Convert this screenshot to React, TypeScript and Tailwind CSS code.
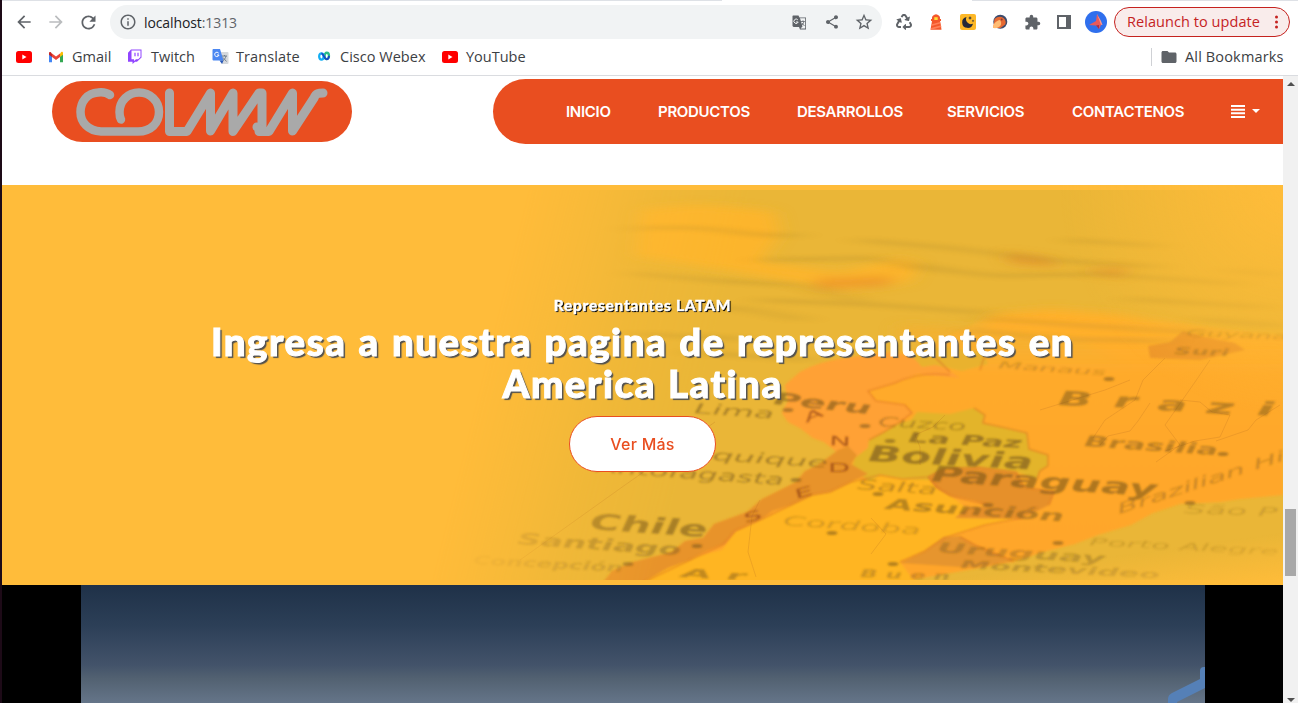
import React from "react";
import { FaRecycle } from "react-icons/fa";
import { MdArrowBack, MdArrowForward, MdExtension, MdRefresh, MdInfoOutline, MdShare, MdStarOutline, MdFolder } from "react-icons/md";

function GmailIcon() {
  return (
    <svg width="16" height="16" viewBox="0 0 16 16">
      <path d="M1 4v9.2h3V7z" fill="#4285f4" />
      <path d="M15 4v9.2h-3V7z" fill="#34a853" />
      <path d="M12 4.5 13.3 3c1-.6 1.7.1 1.7 1.2v1.5L12 8z" fill="#fbbc04" />
      <path d="M4 4.5 8 7.6l4-3.1V8l-4 3-4-3z" fill="#ea4335" />
      <path d="M1 5.7V4.2C1 3 2 2.5 2.8 3.2L4 4.5V8z" fill="#c5221f" />
    </svg>
  );
}

function TwitchIcon() {
  return (
    <svg width="16" height="16" viewBox="0 0 16 16">
      <path d="M4 .5h10.5v8L10 12.800H8L5.500 15v-2.200H1v-9z" fill="#9146ff" />
      <path d="M4.500 1.500h9v6.500l-2.300 2.200H9L7 12v-1.800H4.500z" fill="#fff" />
      <path d="M8 3.700v3.500M11 3.700v3.500" stroke="#9146ff" strokeWidth="1.200" />
    </svg>
  );
}

function TranslateIcon() {
  return (
    <svg width="17" height="17" viewBox="0 0 17 17">
      <path d="M6 4h9.500a1 1 0 0 1 1 1v10a1 1 0 0 1-1 1H10z" fill="#d5d8dc" />
      <path d="M1.200 1H8l3.500 11.500H1.500a1 1 0 0 1-1-1V1.700z" fill="#4b87f2" />
      <path d="m7.500 12.500 2.500 3.500 1.500-3.500z" fill="#2858b8" />
      <path d="M6.700 5.200A2.200 2.200 0 1 0 7 7H5" stroke="#fff" fill="none" />
      <path d="M10 8h5M12.500 7v1m1.500 0c-.5 2-1.500 3.500-3 4.500m0-3 3.500 4" stroke="#687684" fill="none" strokeWidth=".9" />
    </svg>
  );
}

function WebexIcon() {
  return (
    <svg width="14" height="11" viewBox="0 0 16 12" fill="none" strokeWidth="2.600">
      <ellipse cx="11.200" cy="5.300" rx="2.500" ry="3.600" stroke="#28bd88" />
      <ellipse cx="5" cy="6" rx="2.500" ry="3.600" stroke="#12aef3" />
      <path d="M5 2.500c3 0 3 6.800 6 6.800 1.500 0 2.500-2 2.700-4" stroke="#1649c7" strokeWidth="2.200" />
    </svg>
  );
}

function YoutubeIcon() {
  return (
    <svg width="16" height="12" viewBox="0 0 16 12">
      <rect width="16" height="12" rx="2.500" fill="#f00" />
      <path d="m6.300 3.500 4.200 2.500-4.200 2.500z" fill="#fff" />
    </svg>
  );
}

function TranslatePageIcon() {
  return (
    <svg width="15" height="15" viewBox="0 0 15 15">
      <path d="M1 .5h5.500l1 2H14v12H8l-1-2.500H1.500l-1-1V1z" fill="#5f6368" />
      <path d="M8 3.300h5.200v10.300H8.500l2-2z" fill="#f1f3f4" />
      <path d="M5.800 4.800A2.200 2.200 0 1 0 6.200 7H4" stroke="#f1f3f4" fill="none" />
      <path d="M8.800 6.500h4M11 5.300v1.200m1 0c-.4 1.700-1.200 3-2.500 4m.5-2.500 2.500 3" stroke="#5f6368" fill="none" strokeWidth=".8" />
    </svg>
  );
}

function LighthouseIcon() {
  return (
    <svg width="12" height="16" viewBox="0 0 12 16">
      <path d="M2 5V3.500Q2.500 1 6 .3 9.500 1 10 3.500V5h1v2h-1l.8 3.500.7 5.200H.5L2 7H1V5z" fill="#f4572b" />
      <path d="M4.300 3.200h3.400V6H4.300z" fill="#ffdf35" />
      <path d="m2 10.200 7.900-2.200.4 1.600-8.800 2.500zM1 14l10-2.700.3 1.700-9.300 2.500H.7z" fill="#ff8058" />
    </svg>
  );
}

function MoonIcon() {
  return (
    <svg width="16" height="16" viewBox="0 0 16 16">
      <rect width="16" height="16" rx="2" fill="#fdb827" />
      <path d="M6.500 3A5.500 5.500 0 1 0 13 9.700 5 5 0 0 1 6.500 3" fill="#242938" />
      <path d="m10 2 .6 1.400L12 4l-1.400.6L10 6l-.6-1.400L8 4l1.400-.6zM13 5.500l.4 1 .9.400-.9.400-.4 1-.4-1-.9-.4.900-.4z" fill="#242938" />
    </svg>
  );
}

function BirdIcon() {
  return (
    <svg width="16" height="16" viewBox="0 0 16 16">
      <circle cx="8.300" cy="7.800" r="7" fill="#3d4b6c" />
      <path d="M2.500 5Q7 1 11.500 4q3.300 3 1.700 6.500L8.500 14 1 14 2 9z" fill="#e76932" />
      <path d="M1 14c0-4 3-7.500 7-8 3 4 0 9-7 8" fill="#ffbd74" />
      <circle cx="9.700" cy="5.500" r="1" fill="#8b3b35" />
    </svg>
  );
}

function ProfileIcon() {
  return (
    <svg width="22" height="22" viewBox="0 0 22 22">
      <circle cx="11" cy="11" r="11" fill="#2f6fed" />
      <path d="m12 3 4 7 1.500 4-3.500-.5z" fill="#ff968a" />
      <path d="m12 3-1 7-7 4 7 .5 3 3.500 2-4z" fill="#e95a5b" />
      <path d="m11 14.500 3 3.500v-4z" fill="#a22f4d" />
    </svg>
  );
}

function Toolbar() {
  return (
    <div className="flex h-[44px] shrink-0 items-center pr-[8px] pl-[12px] text-[#5f6368]">
      <div className="flex w-[96px] items-center gap-[12px]">
        <MdArrowBack size={20} />
        <MdArrowForward size={20} className="text-[#babcbe]" />
        <MdRefresh size={21} />
      </div>
      <div className="flex h-[34px] w-[772px] items-center rounded-full bg-[#f1f3f4] pr-[8px] pl-[9px]">
        <MdInfoOutline size={18} />
        <span className="ml-[7px] grow font-['Open_Sans',sans-serif] text-[14px] tracking-[-0.1px] text-[#202124]">
          localhost<span className="text-[#5f6368]">:1313</span>
        </span>
        <TranslatePageIcon />
        <MdShare size={16} className="ml-[17px]" />
        <MdStarOutline size={20} className="ml-[14px]" />
      </div>
      <div className="ml-[14px] flex grow items-center">
        <FaRecycle size={16} />
        <span className="ml-[18px]"><LighthouseIcon /></span>
        <span className="ml-[18px]"><MoonIcon /></span>
        <span className="ml-[16px]"><BirdIcon /></span>
        <MdExtension size={17} className="ml-[16px]" />
        <svg className="ml-[16px]" width="14" height="14" viewBox="0 0 14 14">
          <path d="M1 1h12v12H1z" fill="none" stroke="#5f6368" strokeWidth="2" />
          <path d="M9 1h4v12H9z" fill="#5f6368" />
        </svg>
        <span className="ml-[14px]"><ProfileIcon /></span>
      </div>
      <div className="flex h-[30px] w-[176px] items-center justify-between rounded-full border border-[#c5221f] bg-[#f9eceb] pr-[11px] pl-[12px] font-['Open_Sans',sans-serif] text-[14.5px] tracking-[0.06px] text-[#c5221f]">
        <span className="whitespace-nowrap">Relaunch to update</span>
        <svg width="3" height="14" viewBox="0 0 3 14" fill="currentColor">
          <circle cx="1.500" cy="2" r="1.500" /><circle cx="1.500" cy="7" r="1.500" /><circle cx="1.500" cy="12" r="1.500" />
        </svg>
      </div>
    </div>
  );
}

function Bookmarks() {
  return (
    <div className="flex h-[32px] shrink-0 items-center border-b border-[#dadce0] pb-[6px] pl-[14px] font-['Open_Sans',sans-serif] text-[14.5px] text-[#3c4043]">
      <div className="w-[32px]"><YoutubeIcon /></div>
      <div className="flex w-[79px] items-center gap-[8px]"><GmailIcon />Gmail</div>
      <div className="flex w-[85px] items-center gap-[8px]"><TwitchIcon />Twitch</div>
      <div className="flex w-[105px] items-center gap-[7px] tracking-[0.1px]"><TranslateIcon />Translate</div>
      <div className="flex w-[125px] items-center gap-[9px] whitespace-nowrap"><WebexIcon /><span className="tracking-[0.02px]">Cisco Webex</span></div>
      <div className="flex items-center gap-[8px]"><YoutubeIcon />YouTube</div>
      <div className="ml-auto flex items-center border-l border-[#cfd1d5] pl-[8px]">
        <MdFolder size={18} className="mr-[7px] text-[#5f6368]" />
        <span className="w-[113px] whitespace-nowrap leading-[16px] tracking-[0.15px]">All Bookmarks</span>
      </div>
    </div>
  );
}

function ColmanLogo() {
  return (
    <svg width="300" height="61" viewBox="0 0 300 61" role="img" aria-label="Colman">
      <rect width="300" height="61" rx="30.500" fill="#e94e20" />
      <g fill="none" stroke="#a9a9a9" strokeWidth="8.500" strokeLinecap="round" strokeLinejoin="round">
        <path d="M58 14C54 11 50 11 46 11.500 35 12 28.500 21 28.500 31S36 50 49 50.500h37C99 50.500 107 42 107 31S98 11.500 87 11.500 67.500 20 67.500 31c0 3 0 5 1.500 7.500" />
        <path d="M117.500 12v38.500h17.500L158.500 12v38L181 12v38.500L207 12h3v38.500h-3" strokeWidth="9" />
        <path d="M205 46l6 4.500h6L240.500 12v38L262 17c2-5 5-5 9-5" strokeWidth="9" />
      </g>
    </svg>
  );
}

const links = [
  { label: "INICIO", box: "w-[92px]" },
  { label: "PRODUCTOS", box: "w-[139px]" },
  { label: "DESARROLLOS", box: "w-[150px]" },
  { label: "SERVICIOS", box: "w-[125px]" },
  { label: "CONTACTENOS", box: "w-[159px]" },
];

function Header() {
  return (
    <header className="flex h-[109px] shrink-0 items-start justify-between bg-white pt-[3px] pl-[50px]">
      <a href="#" className="mt-[2px]"><ColmanLogo /></a>
      <nav className="flex h-[65px] w-[790px] items-center rounded-l-full bg-[#e94e20] pl-[73px] font-['Inter',sans-serif] text-[15px] font-semibold tracking-[-0.3px] text-white">
        {links.map((l) => <a key={l.label} href="#" className={`shrink-0 pt-[2px] whitespace-nowrap ${l.box}`}>{l.label}</a>)}
        <svg width="30" height="13" viewBox="0 0 30 13" fill="#fff">
          <path d="M0 0h14v2H0zM0 3.700h14v2H0zM0 7.300h14v2H0zM0 11h14v2H0zM21 4h8l-4 4z" />
        </svg>
      </nav>
    </header>
  );
}

type Label = [string, number, number, number, number, number, number, boolean];

// text, x, y, width, size, angle, opacity, bold
const labels: Label[] = [
  ["Lima", 694, 413, 80, 14, 4, 0.5, false],
  ["Peru", 773, 404, 98, 17, 6, 0.55, true],
  ["Cuzco", 878, 426, 88, 13, 3, 0.42, false],
  ["La Paz", 908, 442, 114, 14, 3, 0.6, true],
  ["Bolivia", 868, 461, 165, 22, 3, 0.6, true],
  ["Paraguay", 931, 481, 226, 22, 4, 0.55, true],
  ["Iquique", 702, 459, 126, 14, 4, 0.5, false],
  ["Antofagasta", 596, 472, 188, 15, 4, 0.5, false],
  ["Salta", 857, 489, 80, 14, 4, 0.42, false],
  ["Asunción", 886, 509, 178, 15, 4, 0.48, true],
  ["Cordoba", 783, 525, 138, 13, 4, 0.28, false],
  ["Chile", 590, 529, 117, 22, 4, 0.52, true],
  ["Santiago", 517, 544, 164, 16, 4, 0.38, true],
  ["Concepción", 473, 564, 150, 12, 3, 0.25, true],
  ["B", 1058, 405, 34, 20, 3, 0.48, true],
  ["r", 1113, 407, 24, 20, 3, 0.45, true],
  ["a", 1157, 410, 30, 19, 3, 0.45, true],
  ["z", 1206, 413, 28, 20, 3, 0.45, true],
  ["i", 1256, 415, 18, 19, 3, 0.45, true],
  ["Brasilia", 1084, 446, 134, 15, 4, 0.46, true],
  ["Brazilian Hi", 1119, 514, 175, 14, -18, 0.36, false],
  ["Manaus", 998, 368, 108, 9, 4, 0.3, false],
  ["Guyana", 1186, 336, 102, 9, 2, 0.28, false],
  ["Suri", 1174, 354, 55, 10, 2, 0.38, true],
  ["Uruguay", 937, 552, 168, 14, 4, 0.33, true],
  ["Montevideo", 960, 568, 200, 11, 3, 0.33, true],
  ["Porto Alegre", 1089, 545, 190, 10, 3, 0.22, false],
  ["São P", 1184, 513, 94, 12, 2, 0.22, false],
  ["A r", 681, 577, 65, 12, 3, 0.42, true],
  ["B u e n", 860, 577, 90, 11, 2, 0.32, true],
];

const andes: [string, number, number, number][] = [
  ["A", 806, 423, -22], ["N", 829, 445, 3], ["D", 828, 472, 0], ["E", 796, 499, -15], ["S", 745, 523, -15],
];

const streaks = [
  "M628 229q60-4 100 2t70 4", "M630 273l90 8 80 4 65 18", "M665 305l80 4 60 11", "M760 260l110-2 90 14",
  "M860 240l90 8 100 12 110 7", "M900 266l100 10 100-2 140 10", "M1070 240l90 6", "M980 318l110 8 120 7",
  "M760 300l120 5 110 8", "M635 334l110 5", "M1130 299l135 8", "M1230 270l50 5", "M970 330l90 9 110 2",
  "M1200 319l82 7", "M690 352l120 8",
];

const landShape =
  "M785 385 800 372Q820 361 846 358L880 351 926 350 950 335 985 318 1035 315 1100 322 1170 322 1283 336V495L1240 499 1221 502 1180 504 1153 513 1131 525 1098 535 1075 544 1043 552 1013 562 900 582H604L612 571 633 562 672 552 685 541 703 538 714 524 747 512 762 499 796 482 805 471 818 465 837 452 824 442 813 438 800 428 788 422 782 413 788 401Z";
const argentinaShape =
  "M851 478 870 481 880 475 902 479 928 477 938 488 951 496 966 508 955 518 1021 518 985 525 944 538 925 551 900 562 915 582H640L668 568 690 558 722 550 735 532 762 519 791 505 812 495 830 492Z";
const andesShape =
  "M838 450 848 446 857 455 851 464 868 474 851 482 830 492 812 495 791 505 772 511 762 519 735 531 724 544 706 551 690 560 668 568 644 582H603L612 571 633 562 672 552 685 541 703 538 714 524 747 512 762 499 796 482 805 471 818 465Z";
const boliviaShape =
  "M911 420 917 412 950 414 974 408 985 415 983 423 1006 428 1027 433 1029 449 1048 455 1048 466 1040 471 1037 479 1016 472 977 467 961 471 950 476 928 480 902 479 880 475 870 481 851 470 855 458 868 448 869 440 884 432 897 424Z";

function SouthAmericaMap() {
  return (
    <svg width="1281" height="400" viewBox="2 185 1281 400" className="block">
      <defs>
        <linearGradient id="fade" gradientUnits="userSpaceOnUse" x1="575" x2="785" y1="0" y2="52">
          <stop offset="0" stopColor="#000" /><stop offset=".3" stopColor="#555" /><stop offset=".6" stopColor="#bbb" /><stop offset="1" stopColor="#fff" />
        </linearGradient>
        <radialGradient id="corner" gradientUnits="userSpaceOnUse" cx="1290" cy="185" r="230">
          <stop offset="0" stopColor="#ffbc3a" /><stop offset="1" stopColor="#ffbc3a" stopOpacity="0" />
        </radialGradient>
        <linearGradient id="cornerLow" x1=".5" x2="1" y1="0" y2="1">
          <stop offset=".6" stopColor="#ffbc3a" stopOpacity="0" /><stop offset="1" stopColor="#ffbc3a" />
        </linearGradient>
        <linearGradient id="land" x1="0" x2="0" y1="0" y2="1">
          <stop offset="0" stopColor="#ffb02f" stopOpacity=".25" /><stop offset=".22" stopColor="#ffaa2b" /><stop offset="1" stopColor="#ffa52b" />
        </linearGradient>
        <mask id="mapMask"><rect x="400" y="190" width="883" height="390" fill="url(#fade)" /></mask>
        <filter id="far" x="-20%" y="-40%" width="140%" height="180%"><feGaussianBlur stdDeviation="9 4.500" /></filter>
        <filter id="mist" filterUnits="userSpaceOnUse" x="400" y="185" width="883" height="400"><feGaussianBlur stdDeviation="14 2.200" /></filter>
        <filter id="near"><feGaussianBlur stdDeviation="1.200" /></filter>
        <filter id="ink"><feGaussianBlur stdDeviation="1.200 .8" /></filter>
      </defs>
      <rect x="2" y="185" width="1281" height="400" fill="#ffbc3a" />
      <g mask="url(#mapMask)">
        <rect x="400" y="185" width="883" height="400" fill="#eab637" />
        <g filter="url(#far)">
          <path d="M640 210Q700 200 775 212l5 22-20 28 80 10 60-14 20 6-10 18-65 8-120-20-90-14z" fill="#ffb52a" opacity=".85" />
          <path d="M815 279l80-3-8 10-70 3z" fill="#ee9a2a" />
          <path d="M1005 253l45 6 10 8-50-4zM1080 270l50-3-10 10z" fill="#e08c2b" opacity=".7" />
          <path d="M990 315l60-6 70 5 120 22 60 0v30l-160 5-60-30-100-8z" fill="#ffb02a" />
          <path d="M900 325l70 3 30 12-20 10-80-10z" fill="#f2b132" />
        </g>
        <g filter="url(#near)">
          <path d={landShape} fill="url(#land)" />
          <path d="M785 385 800 372Q820 361 846 358L890 353 926 357 950 371 960 378 918 374 895 383 868 391 876 401 905 405 912 413 897 424 884 432 869 440 868 448 855 458 848 464 837 452 824 442 813 438 800 428 788 422 782 413 788 401Z" fill="#ffa136" />
          <path d="M911 355 940 347 983 352 988 364 962 371 935 365 922 367Z" fill="#e9b22f" />
          <path d={argentinaShape} fill="#ffb524" />
          <path d={boliviaShape} fill="#e3b42a" />
          <path d={andesShape} fill="#e8932a" />
          <path d="M928 477 943 469 977 467 1016 472 1024 487 1054 492 1049 505 1021 519 955 518 966 509 988 506 975 501 950 496 936 488Z" fill="#e6902b" />
          <path d="M944 537 960 536 975 545 1013 561 975 568 900 563 925 551Z" fill="#e6952d" />
          <path d="M1148 346 1170 342 1183 331 1205 337 1235 343 1245 350 1200 360 1150 358Z" fill="#ee9629" />
        </g>
        <g fill="none" stroke="#d66a22" strokeWidth="1.200" opacity=".6" filter="url(#ink)">
          <path d="M950 375Q920 371 895 383L868 391 876 401 905 405 912 413 897 424 884 432 869 440" />
          <path d="M974 408 985 415 983 423 1006 428 1027 433 1029 449 1048 455 1048 466 1040 471 1037 479" />
          <path d="M851 482 880 475 902 479 928 477 943 469 977 467 1016 472 1024 487 1054 492 1049 505" />
          <path d="M928 477 938 488 951 496 988 505M1021 518 985 525 944 538 925 551 900 562M950 372l-15-15M980 370l5-15M960 537l15 8 38 16" />
          <path d="M851 482 830 492 812 495 791 505 762 519 735 531 724 544 690 560 644 582" />
        </g>
        <g fill="none" stroke="#b76b21" strokeWidth=".8" opacity=".3">
          <path d="M1165 358l-22 22-8 20-30 20-12 18M1210 360l-15 22-30 43 15 20-24 17M1100 445l8-9 22-5 8-10 12-18M1180 400l20 2 12 10 18 3-10 22-25 4-30 10M1130 380l-25 10-65 20M1280 405l-24 15-8 10-32 11M520 560l105-75 90-63M760 500l-8 16-4 36 8 25M871 518l15 16-15 20M945 415l-12 12-18 8 5 12 0 18" />
        </g>
        <g fill="none" stroke="#9b7c2a" strokeWidth="3" opacity=".28" filter="url(#mist)">
          {streaks.map((d) => <path key={d} d={d} />)}
        </g>
        <g fill="#6e501b" fontFamily="'DejaVu Sans', sans-serif" fontStyle="italic" filter="url(#ink)">
          {labels.map(([t, x, y, w, s, a, o, b]) => (
            <text key={t + x} x={x} y={y} fontSize={s} fontWeight={b ? 700 : 400} opacity={o} textLength={w} lengthAdjust="spacingAndGlyphs" transform={`rotate(${a} ${x} ${y})`}>{t}</text>
          ))}
          {andes.map(([t, x, y, a]) => (
            <text key={t} transform={`translate(${x} ${y}) rotate(${a}) scale(1.800 .8)`} fontSize="16" fontStyle="normal" fill="#9a4b17" opacity=".8">{t}</text>
          ))}
          {[[788, 410], [865, 426], [890, 441], [796, 480], [878, 494], [988, 505], [697, 546], [832, 533], [1223, 454], [1109, 379], [628, 564], [893, 564], [1058, 543], [1190, 503]].map(([x, y]) => (
            <ellipse key={x} cx={x} cy={y} rx="5.500" ry="2" opacity=".5" />
          ))}
        </g>
      </g>
      <rect x="1050" y="185" width="233" height="230" fill="url(#corner)" />
      <rect x="900" y="480" width="383" height="105" fill="url(#cornerLow)" />
    </svg>
  );
}

function Hero() {
  return (
    <section className="grid h-[400px] shrink-0">
      <div className="col-start-1 row-start-1"><SouthAmericaMap /></div>
      <div className="z-10 col-start-1 row-start-1 flex flex-col items-center pt-[110px] text-center font-['Lato',sans-serif] font-black text-white">
        <p className="text-[15.5px] leading-[20px] tracking-[0.7px] [-webkit-text-stroke:0.4px_#fff] [text-shadow:1px_1px_1px_#000,1px_1px_0_#000]">Representantes LATAM</p>
        <h2 className="mt-[5px] text-[38.5px] leading-[42px] tracking-[1.5px] whitespace-nowrap [-webkit-text-stroke:1px_#fff] [word-spacing:1.5px] [text-shadow:2px_2px_1px_#505050]">
          Ingresa a nuestra pagina de representantes en<br />America Latina
        </h2>
        <button className="mt-[12px] h-[56px] w-[147px] rounded-full border border-[#e94e20] bg-white font-['Inter',sans-serif] text-[16px] font-medium tracking-[0.25px] text-[#e94e20]">Ver Más</button>
      </div>
    </section>
  );
}

function VideoStrip() {
  return (
    <section className="flex min-h-0 grow justify-center bg-black pl-px">
      <div className="flex w-[1124px] items-end justify-end bg-[linear-gradient(180deg,#1f3148_0%,#2c3f57_34%,#43536a_68%,#526171_79%,#657589_100%)]">
        <svg width="38" height="38" viewBox="0 0 38 38">
          <path d="M1 38v-4q0-4 4-6L33 14V6q0-4 4-4h1v21L10 37v1z" fill="#5580b7" />
        </svg>
      </div>
    </section>
  );
}

function Scrollbar() {
  return (
    <aside className="flex w-[15px] shrink-0 flex-col items-center bg-[#f1f1f1]">
      <svg className="mt-[6px]" width="8" height="4" viewBox="0 0 8 4"><path d="m0 4 4-4 4 4z" fill="#505050" /></svg>
      <div className="mt-[423px] h-[67px] w-[11px] bg-[#a8a8a8]" />
      <svg className="mt-auto mb-px" width="8" height="4" viewBox="0 0 8 4"><path d="m0 0 4 4 4-4z" fill="#505050" /></svg>
    </aside>
  );
}

export default function App() {
  return (
    <div className="flex h-[703px] w-[1298px] overflow-hidden bg-white">
      <div className="w-[2px] shrink-0 bg-[#1d0a17]" />
      <div className="flex w-[1296px] flex-col">
        <div className="-mb-px flex h-px shrink-0 justify-between">
          <div className="w-[720px] bg-[#dee1e6]" />
          <div className="w-[326px] bg-[#dee1e6]" />
        </div>
        <Toolbar />
        <Bookmarks />
        <div className="flex min-h-0 grow">
          <main className="flex w-[1281px] flex-col">
            <Header />
            <Hero />
            <VideoStrip />
          </main>
          <Scrollbar />
        </div>
      </div>
    </div>
  );
}
